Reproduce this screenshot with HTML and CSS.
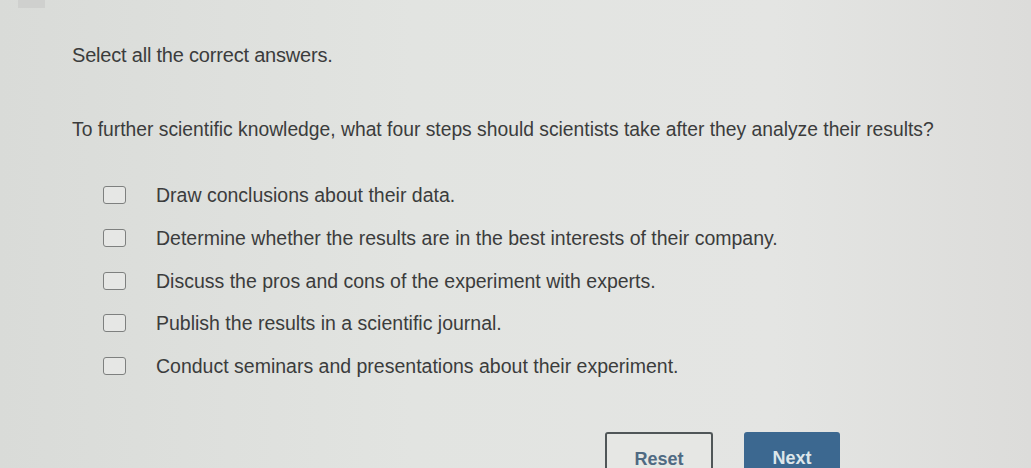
FILE: index.html
```html
<!DOCTYPE html>
<html>
<head>
<meta charset="utf-8">
<link rel="stylesheet" href="styles.css">
</head>
<body>
<div class="page">
  <div class="topline"></div>
  <p class="instruction">Select all the correct answers.</p>
  <p class="question">To further scientific knowledge, what four steps should scientists take after they analyze their results?</p>
  <ul class="options">
    <li class="option"><span class="box"></span><span class="label">Draw conclusions about their data.</span></li>
    <li class="option"><span class="box"></span><span class="label">Determine whether the results are in the best interests of their company.</span></li>
    <li class="option"><span class="box"></span><span class="label">Discuss the pros and cons of the experiment with experts.</span></li>
    <li class="option"><span class="box"></span><span class="label">Publish the results in a scientific journal.</span></li>
    <li class="option"><span class="box"></span><span class="label">Conduct seminars and presentations about their experiment.</span></li>
  </ul>
  <div class="actions">
    <button class="btn reset">Reset</button>
    <button class="btn next">Next</button>
  </div>
</div>
</body>
</html>
```
FILE: styles.css
```css
html, body {
  margin: 0;
  padding: 0;
  height: 100%;
  overflow: hidden;
}
body {
  background: linear-gradient(90deg, #d9dbd8 0%, #e2e4e1 40%, #e4e5e3 75%, #dcdcda 100%);
  font-family: "Liberation Sans", Arial, sans-serif;
  color: #3b3c3c;
}
.page {
  position: relative;
  height: 468px;
  padding: 0 0 0 72px;
  box-sizing: border-box;
}
.topline {
  position: absolute;
  left: 18px;
  top: 0;
  width: 27px;
  height: 8px;
  background: #cfd0ce;
}
.instruction {
  margin: 0;
  padding-top: 44px;
  font-size: 20px;
  line-height: 22px;
  letter-spacing: -0.2px;
}
.question {
  margin: 53px 0 0;
  font-size: 19.3px;
  line-height: 22px;
}
.options {
  list-style: none;
  margin: 43px 0 0 31px;
  padding: 0;
  display: flex;
  flex-direction: column;
  gap: 20.75px;
}
.option {
  display: flex;
  align-items: center;
  height: 22px;
}
.box {
  width: 21px;
  height: 16px;
  border: 1.5px solid #7e807f;
  border-radius: 3px;
  background: #e6e7e5;
  flex: none;
}
.label {
  margin-left: 30px;
  font-size: 19.5px;
  line-height: 22px;
}
.actions {
  display: flex;
  gap: 31px;
  margin: 55px 0 0 533px;
}
.btn {
  font-family: "Liberation Sans", Arial, sans-serif;
  font-size: 18px;
  font-weight: bold;
  line-height: 20px;
  height: 40px;
  padding: 12px 0 0;
  box-sizing: border-box;
  border-radius: 3px 3px 0 0;
  text-align: center;
}
.reset {
  width: 108px;
  background: #e6e7e4;
  border: 2px solid #505658;
  border-bottom: none;
  color: #4f6a82;
}
.next {
  width: 96px;
  background: #3c6890;
  border: none;
  color: #dde6ea;
}
```
